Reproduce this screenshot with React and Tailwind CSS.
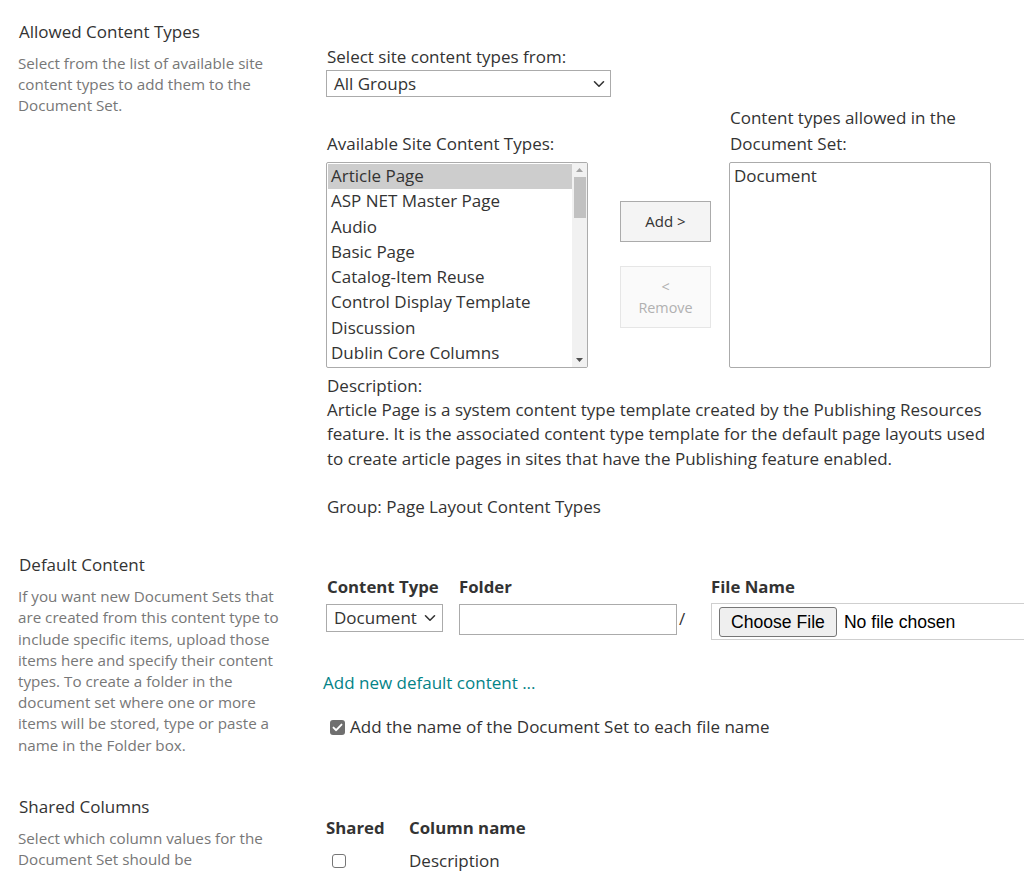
import React from "react";

function Chevron({ className = "" }) {
  return (
    <svg className={className} width="12" height="8" viewBox="0 0 12 8" fill="none">
      <path d="M1.5 1.8 L6 6.2 L10.5 1.8" stroke="#333" strokeWidth="1.6" strokeLinecap="round" strokeLinejoin="round" />
    </svg>
  );
}

function ScrollBar() {
  return (
    <div className="w-[15px] shrink-0 bg-[#f1f1f1] flex flex-col items-center">
      <div className="h-[14px] flex items-center justify-center">
        <svg width="7" height="4" viewBox="0 0 7 4"><path d="M0 4 L3.5 0 L7 4 Z" fill="#a3a3a3" /></svg>
      </div>
      <div className="w-[12px] h-[41px] bg-[#c1c1c1]" />
      <div className="flex-1" />
      <div className="h-[14px] flex items-center justify-center">
        <svg width="7" height="4" viewBox="0 0 7 4"><path d="M0 0 L3.5 4 L7 0 Z" fill="#505050" /></svg>
      </div>
    </div>
  );
}

const items = [
  "Article Page",
  "ASP NET Master Page",
  "Audio",
  "Basic Page",
  "Catalog-Item Reuse",
  "Control Display Template",
  "Discussion",
  "Dublin Core Columns",
];

export default function App() {
  return (
    <div className="min-h-[871px] bg-white font-['Open_Sans',sans-serif] text-[#333] overflow-hidden">
      {/* Section 1 */}
      <div className="flex pt-[21px]">
        <div className="w-[326px] shrink-0 pl-[18px]">
          <div className="text-[17px] leading-[22px] pl-px">Allowed Content Types</div>
          <div className="mt-[10px] text-[15.2px] leading-[21px] text-[#777] whitespace-nowrap">
            Select from the list of available site
            <br />
            content types to add them to the
            <br />
            Document Set.
          </div>
        </div>
        <div className="flex-1 pt-[24px]">
          <div className="text-[17px] leading-[24px] pl-px">Select site content types from:</div>
          <div className="mt-px h-[27px] w-[285px] border border-[#ababab] flex items-center justify-between pl-[7px] pr-[5px] text-[17px]">
            <span>All Groups</span>
            <Chevron />
          </div>
          <div className="mt-[8px] flex items-end">
            <div>
              <div className="text-[17px] leading-[26px] pl-px">Available Site Content Types:</div>
              <div className="mt-[5px] w-[262px] h-[206px] border border-[#ababab] rounded-[2px] flex overflow-hidden">
                <div className="flex-1 pt-px pl-px">
                  {items.map((it, i) => (
                    <div
                      key={it}
                      className={
                        "h-[25.3px] leading-[24px] pl-[3px] text-[17px] whitespace-nowrap " +
                        (i === 0 ? "bg-[#cdcdcd]" : "")
                      }
                    >
                      {it}
                    </div>
                  ))}
                </div>
                <ScrollBar />
              </div>
            </div>
            <div className="ml-[32px] mb-[40px] flex flex-col gap-[24px]">
              <div className="w-[91px] h-[41px] border border-[#ababab] bg-[#f4f4f4] flex items-center justify-center text-[15px] text-[#333]">
                Add &gt;
              </div>
              <div className="w-[91px] h-[62px] border border-[#e6e6e6] bg-[#fafafa] flex flex-col items-center justify-center text-[14.4px] leading-[21px] text-[#b1b1b1]">
                <span>&lt;</span>
                <span>Remove</span>
              </div>
            </div>
            <div className="ml-[18px]">
              <div className="text-[17px] leading-[26px] pl-px whitespace-nowrap">
                Content types allowed in the
                <br />
                Document Set:
              </div>
              <div className="mt-[5px] w-[262px] h-[206px] border border-[#ababab] rounded-[2px] pt-px pl-[4px] text-[17px] leading-[24px]">
                Document
              </div>
            </div>
          </div>
          <div className="mt-[6px] text-[17px] leading-[24.2px] whitespace-nowrap pl-px">
            Description:
            <br />
            Article Page is a system content type template created by the Publishing Resources
            <br />
            feature. It is the associated content type template for the default page layouts used
            <br />
            to create article pages in sites that have the Publishing feature enabled.
            <br />
            <br />
            Group: Page Layout Content Types
          </div>
        </div>
      </div>

      {/* Section 2 */}
      <div className="flex mt-[35px]">
        <div className="w-[326px] shrink-0 pl-[18px]">
          <div className="text-[17px] leading-[22px] pl-px">Default Content</div>
          <div className="mt-[10px] text-[15.2px] leading-[21.2px] text-[#777] whitespace-nowrap">
            If you want new Document Sets that
            <br />
            are created from this content type to
            <br />
            include specific items, upload those
            <br />
            items here and specify their content
            <br />
            types. To create a folder in the
            <br />
            document set where one or more
            <br />
            items will be stored, type or paste a
            <br />
            name in the Folder box.
          </div>
        </div>
        <div className="flex-1 pt-[21px]">
          <div className="flex text-[16.8px] leading-[24px] font-bold">
            <div className="w-[133px] pl-px">Content Type</div>
            <div className="w-[252px]">Folder</div>
            <div>File Name</div>
          </div>
          <div className="mt-[5px] flex items-start">
            <div className="w-[133px]">
              <div className="w-[117px] h-[28px] border border-[#ababab] flex items-center justify-between pl-[7px] pr-[6px] text-[17px]">
                <span>Document</span>
                <Chevron />
              </div>
            </div>
            <div className="w-[252px] flex items-start">
              <div className="w-[218px] h-[31px] border border-[#ababab]" />
              <span className="ml-[2px] mt-[3px] text-[17px] leading-[24px]">/</span>
            </div>
            <div className="-mt-px w-[340px] h-[37px] border border-[#cfcfcf] flex items-center pl-[7px] font-['Liberation_Sans',Arial,sans-serif] text-[17.6px]">
              <div className="h-[30px] px-[11px] border border-[#767676] rounded-[3px] bg-[#efefef] text-black flex items-center">
                Choose File
              </div>
              <span className="ml-[7px] text-black">No file chosen</span>
            </div>
          </div>
          <div className="mt-[31px] -ml-[3px] text-[17px] leading-[24px] text-[#038387]">
            Add new default content ...
          </div>
          <div className="mt-[20px] flex items-center h-[24px] text-[17px]">
            <div className="ml-[4px] w-[15px] h-[15px] rounded-[3px] bg-[#6f6f6f] flex items-center justify-center">
              <svg width="11" height="9" viewBox="0 0 11 9" fill="none">
                <path d="M1.5 4.6 L4.2 7.2 L9.5 1.6" stroke="#fff" strokeWidth="1.9" strokeLinecap="round" strokeLinejoin="round" />
              </svg>
            </div>
            <span className="ml-[5px]">Add the name of the Document Set to each file name</span>
          </div>
        </div>
      </div>

      {/* Section 3 */}
      <div className="flex mt-[40px]">
        <div className="w-[326px] shrink-0 pl-[18px]">
          <div className="text-[17px] leading-[22px] pl-px">Shared Columns</div>
          <div className="mt-[10px] text-[15.2px] leading-[21px] text-[#777] whitespace-nowrap">
            Select which column values for the
            <br />
            Document Set should be
          </div>
        </div>
        <div className="flex-1 pt-[20px]">
          <div className="flex text-[16.8px] leading-[24px] font-bold">
            <div className="w-[83px]">Shared</div>
            <div>Column name</div>
          </div>
          <div className="mt-[9px] flex items-center h-[24px] text-[17px]">
            <div className="w-[83px]">
              <div className="ml-[6px] w-[14px] h-[14px] rounded-[3px] border border-[#767676] bg-white" />
            </div>
            <span>Description</span>
          </div>
        </div>
      </div>
    </div>
  );
}
